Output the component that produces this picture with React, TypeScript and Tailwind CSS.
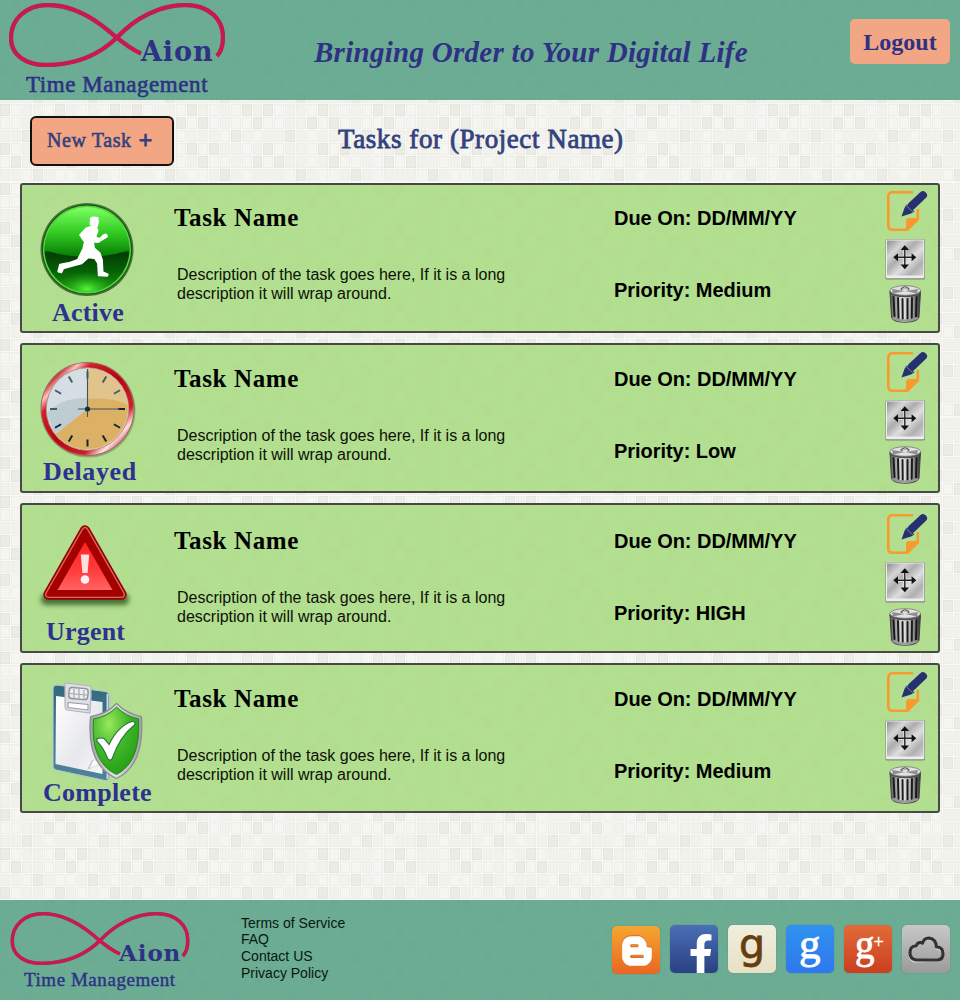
import type { ReactNode } from "react";
import { FaBloggerB, FaFacebookF } from "react-icons/fa";

const TILE_ROWS = ["DlmmlDmlmlDm", "llmmDlDlmllD", "mmDmlmmmlDml", "DlmmlDlDmmlm", "lDmmlmDllmlD", "mmlDmllmDmlm"];
const TILE_FILL: Record<string, string> = { D: "#edece4", m: "#f2f1eb", l: "#f5f6f2" };

function Mosaic() {
  const tiles: ReactNode[] = [];
  TILE_ROWS.forEach((row, r) => {
    for (let c = 0; c < 24; c++) {
      const kind = row[c % 12];
      tiles.push(
        <rect
          key={`${r}-${c}`}
          x={c * 11 + 0.5}
          y={r * 13 + 0.5}
          width={c === 23 ? 8 : 9}
          height={11}
          fill={TILE_FILL[kind]}
          stroke={kind === "D" ? "#e7e6de" : "#eeeee8"}
        />
      );
    }
  });
  const copies: ReactNode[] = [];
  for (let row = 0; row < 14; row++) {
    for (let col = 0; col < 4; col++) {
      copies.push(<use key={`${row}-${col}`} href="#mosaic" x={col * 263} y={Math.round(26 + (row - 1) * 78.3)} />);
    }
  }
  return (
    <svg className="absolute inset-0 -z-10 h-full w-full" aria-hidden="true">
      <defs>
        <g id="mosaic">{tiles}</g>
      </defs>
      <rect width="100%" height="100%" fill="#f8f8f6" />
      {copies}
    </svg>
  );
}

function Infinity({ className }: { className: string }) {
  const d =
    "M141 53.5C128 48 118 38.500 107 29.500C88 14 68 5 48 5C25 5 11 20 11 38C11 56 27 65 46 65C76 65 99 55 117 37.500C135 18 160 5 185 5C210 5 223 20 223 37C223 46 221 52 217 56";
  return (
    <svg viewBox="9 3 216 64" className={className} fill="none">
      <path d={d} stroke="#8d3a5c" strokeWidth="4.4" />
      <path d={d} stroke="#d0154f" strokeWidth="3.5" />
    </svg>
  );
}

function RunnerIcon() {
  return (
    <>
      <defs>
        <linearGradient id="orb" x1="0" y1="0" x2="0" y2="1">
          <stop offset="0" stopColor="#6dfb53" />
          <stop offset="0.25" stopColor="#35d425" />
          <stop offset="0.5" stopColor="#0b8a08" />
          <stop offset="0.54" stopColor="#043c04" />
          <stop offset="0.75" stopColor="#075f06" />
          <stop offset="1" stopColor="#1c9c12" />
        </linearGradient>
        <radialGradient id="orbGlow">
          <stop offset="0" stopColor="#57f53b" />
          <stop offset="1" stopColor="#18a010" stopOpacity="0" />
        </radialGradient>
        <linearGradient id="orbTop" x1="0" y1="0" x2="0" y2="1">
          <stop offset="0" stopColor="#7dff64" />
          <stop offset="0.5" stopColor="#33cc22" />
          <stop offset="1" stopColor="#067b05" />
        </linearGradient>
        <clipPath id="orbClip">
          <circle cx="87" cy="66.500" r="42.500" />
        </clipPath>
      </defs>
      <circle cx="87" cy="66.500" r="46.500" fill="#47743c" />
      <circle cx="87" cy="66.500" r="45" fill="#1d4d18" />
      <circle cx="87" cy="66.500" r="44" fill="#52da3c" />
      <circle cx="87" cy="66.500" r="42.500" fill="url(#orb)" />
      <path d="M44.500 67A42.500 42.500 0 0 1 129.500 67Q109 74 87 74Q65 74 44.500 67Z" fill="url(#orbTop)" />
      <ellipse cx="87" cy="106" rx="30" ry="17" fill="url(#orbGlow)" clipPath="url(#orbClip)" />
      <g fill="#fff" stroke="#fff" strokeWidth="1.900" strokeLinejoin="round">
        <path d="M91 35.500Q93 33.500 97.500 35L98 39L97 43L93.500 43.500L90.500 41Z" />
        <path d="M91 43.700L86 45.600L80.200 52L84 57.700L85.600 56.600L84.600 53.500L86.600 51.600L83.400 65.300L77.800 77L70 79.600L60 81.600L58.300 88.500L61.300 89.200L63.300 85.300L75 82L81.700 80.300L88.300 74.300L95 75.300L98 80.300L98.800 92.400L107.300 92.900L107.600 91.300L102.500 89L102 77L99.700 70.300L94 65.300L93 58.500L98.300 59L107 53.500L106 51.500L103.300 52.300L100 56L95.300 54.300L97.500 47.700L96 43.800Z" />
      </g>
    </>
  );
}

function ClockIcon() {
  const ticks = Array.from({ length: 12 }, (_, i) => i * 30);
  return (
    <>
      <defs>
        <linearGradient id="rim" x1="0" y1="0" x2="1" y2="1">
          <stop offset="0.12" stopColor="#b81c1c" />
          <stop offset="0.19" stopColor="#ffc4c4" />
          <stop offset="0.26" stopColor="#cc2228" />
          <stop offset="0.5" stopColor="#b4070c" />
          <stop offset="0.74" stopColor="#cc2228" />
          <stop offset="0.83" stopColor="#ffe2e2" />
          <stop offset="0.92" stopColor="#c52a2a" />
        </linearGradient>
      </defs>
      <circle cx="88.500" cy="67.500" r="47" fill="#5a6f44" opacity="0.450" />
      <circle cx="87.500" cy="66" r="47" fill="#8a6a66" />
      <circle cx="87.500" cy="66" r="46.200" fill="#d96c6c" />
      <circle cx="87.500" cy="66" r="43.600" fill="none" stroke="url(#rim)" strokeWidth="4.600" />
      <circle cx="87.500" cy="66" r="41.200" fill="#d5dee3" stroke="#b98f8a" strokeWidth="0.900" />
      <path d="M47 70Q64 51 100 56Q118 57 128 61A41 41 0 0 1 54 89Z" fill="#bfccd2" />
      <path d="M87.500 66V25.400A40.600 40.600 0 1 1 55.800 91.300Z" fill="#e1c38c" />
      <path d="M87.500 66V56Q113 54 127.500 62A40.600 40.600 0 0 1 55.800 91.300Z" fill="#ddb165" />
      {ticks.map((a) => (
        <path key={a} d="M87.500 28.500V35.500" stroke={a > 60 && a < 270 ? "#092836" : "#405e69"} strokeWidth="2" transform={`rotate(${a} 87.500 66)`} />
      ))}
      <path d="M87.500 26V74M78 66H120" stroke="#40555b" strokeWidth="1.100" />
      <circle cx="87.500" cy="66" r="2.600" fill="#0b3347" />
    </>
  );
}

function WarningIcon() {
  return (
    <>
      <defs>
        <linearGradient id="alarm" x1="0" y1="0" x2="0" y2="1">
          <stop offset="0" stopColor="#ff2424" />
          <stop offset="0.6" stopColor="#ff3c3c" />
          <stop offset="1" stopColor="#ff6464" />
        </linearGradient>
        <filter id="soft" x="-20%" y="-100%" width="140%" height="300%">
          <feGaussianBlur stdDeviation="2.500" />
        </filter>
      </defs>
      <rect x="41" y="91" width="88" height="11" rx="5" fill="#4a7034" filter="url(#soft)" />
      <path d="M85 27.500L48.500 91.500H121.500Z" fill="#a40000" stroke="#970000" strokeWidth="10.500" strokeLinejoin="round" />
      <path d="M85 27.500L48.500 91.500H121.500Z" fill="#a40000" stroke="#d96a6a" strokeWidth="7" strokeLinejoin="round" />
      <path d="M85 27.500L48.500 91.500H121.500Z" fill="#a40000" stroke="#a40000" strokeWidth="4.500" strokeLinejoin="round" />
      <path d="M85 39L57.500 87H112.500Z" fill="url(#alarm)" />
      <path d="M80.800 51.500H89.200L87.600 70H82.400Z" fill="#ffdede" />
      <circle cx="85" cy="76.500" r="4.300" fill="#fff0f0" />
    </>
  );
}

function ClipboardIcon() {
  return (
    <>
      <defs>
        <linearGradient id="paper" x1="0" y1="0" x2="1" y2="1">
          <stop offset="0" stopColor="#ffffff" />
          <stop offset="0.6" stopColor="#e7e8ec" />
          <stop offset="1" stopColor="#f8f8fa" />
        </linearGradient>
        <linearGradient id="board" x1="0" y1="0" x2="0" y2="1">
          <stop offset="0" stopColor="#336a80" />
          <stop offset="1" stopColor="#4f8397" />
        </linearGradient>
        <radialGradient id="shield" cx="0.35" cy="0.25" r="0.85">
          <stop offset="0" stopColor="#9be85c" />
          <stop offset="0.5" stopColor="#3db627" />
          <stop offset="1" stopColor="#239a13" />
        </radialGradient>
        <linearGradient id="silver" x1="0" y1="0" x2="1" y2="0">
          <stop offset="0" stopColor="#a0a0a6" />
          <stop offset="0.5" stopColor="#e0e0e4" />
          <stop offset="1" stopColor="#a0a0a6" />
        </linearGradient>
      </defs>
      <path d="M57 22L105 28.500Q109.500 29 109.500 34V114.500Q109 118 105 117.500L56 107Q53 106.500 53 103V26Q53 22 57 22Z" fill="url(#board)" stroke="#b3c8d0" strokeWidth="1.200" />
      <path d="M107.500 31V116" stroke="#c6dbe2" strokeWidth="2" />
      <path d="M56 33L102.500 39V111L55.500 101Z" fill="url(#paper)" />
      <path d="M87 107L92 97L96 99L102.500 96Z" fill="#c2c4ca" />
      <path d="M93 97L89 106L102.500 100V97Z" fill="#fafafa" stroke="#bbb" strokeWidth="0.500" />
      <path d="M65 20L91 23V34L90 50L67 47Q65 46 65 43Z" fill="#dedfe4" stroke="#b5b6bd" strokeWidth="1.200" />
      <rect x="69" y="25" width="19" height="11" rx="3" fill="#eeeef2" stroke="#8d929a" strokeWidth="1.400" transform="rotate(5 78 30)" />
      <path d="M74 26V35M79 26V36M84 27V36M69 30.500L87 32" stroke="#a4a8af" strokeWidth="1.200" />
      <path d="M68 39.500L88 41.500V47L68 44.500Z" fill="#fff" stroke="#999ca6" strokeWidth="1.100" />
      <path d="M116.500 40.500Q107 51 90.500 53.500Q86 102 116.500 115.500Q145 102 141.500 53.500Q127 51 116.500 40.500Z" fill="url(#silver)" stroke="#8a8c8e" strokeWidth="1.200" strokeLinejoin="round" />
      <path d="M116.500 44Q108 53.500 93.500 56Q90 99 116.500 111.500Q141 99 138.500 56Q126 53.500 116.500 44Z" fill="url(#shield)" stroke="#208b17" strokeWidth="1" />
      <path d="M97 75.500Q102 74.500 104 75.500L109 81.500Q118 63 132 58.500Q136 58 134.500 62Q120 73 112 96Q109 99 107 94Q103 84 97 78.500Z" fill="#fff" stroke="#28753a" strokeWidth="1.100" />
    </>
  );
}

function EditIcon() {
  return (
    <svg viewBox="0 0 44 44" className="h-11 w-11" fill="none">
      <path d="M29 2.300H8.500Q4.300 2.300 4.300 6.500V35.500Q4.300 39.700 8.500 39.700H22L33.800 29V19" stroke="#fa9a2c" strokeWidth="2.600" />
      <path d="M22 41V31Q22 28 25 28H35V30L24 41Z" fill="#fa9a2c" />
      <path d="M27.500 16L39 5.200" stroke="#29306f" strokeWidth="8" strokeLinecap="round" />
      <path d="M22.500 14.500L30.500 21.500L27 23.500L17.500 26.500L20.500 18Z" fill="#29306f" />
      <path d="M22 15.500L29.500 22.500" stroke="#b2de90" strokeWidth="0.500" />
    </svg>
  );
}

function MoveIcon() {
  return (
    <svg viewBox="0 0 44 46" className="h-[46px] w-11">
      <defs>
        <linearGradient id="steel" x1="0" y1="0" x2="1" y2="1">
          <stop offset="0" stopColor="#8e8e8e" />
          <stop offset="0.25" stopColor="#d5d5d5" />
          <stop offset="0.42" stopColor="#adadad" />
          <stop offset="0.6" stopColor="#dedede" />
          <stop offset="0.8" stopColor="#b0b0b0" />
          <stop offset="1" stopColor="#d4d4d4" />
        </linearGradient>
      </defs>
      <rect x="1.500" y="5" width="39.500" height="40.500" rx="1.500" fill="#80887a" />
      <rect x="2" y="5.500" width="38.300" height="38.800" rx="1" fill="#ededed" />
      <rect x="3" y="6.500" width="36.300" height="35" fill="url(#steel)" />
      <path d="M20.800 14V33M11 23.300H30.500" stroke="#e8e8e8" strokeWidth="3" />
      <path d="M20.800 14V33M11 23.300H30.500" stroke="#222" strokeWidth="1.400" />
      <path d="M20.800 11.300L25 16H16.600ZM20.800 35.300L25 30.600H16.600ZM9.300 23.300L14 19.300V27.300ZM32.300 23.300L27.600 19.300V27.300Z" fill="#111" />
    </svg>
  );
}

function TrashIcon() {
  return (
    <svg viewBox="0 0 44 46" className="h-[46px] w-11">
      <defs>
        <linearGradient id="can" x1="0" y1="0" x2="1" y2="0">
          <stop offset="0" stopColor="#555" />
          <stop offset="0.4" stopColor="#eee" />
          <stop offset="0.7" stopColor="#aaa" />
          <stop offset="1" stopColor="#333" />
        </linearGradient>
      </defs>
      <path d="M6 12L7.500 37Q8 42 21 42.300Q34 42 35 37L36.500 12Z" fill="url(#can)" stroke="#3d3d3d" strokeWidth="0.900" />
      <path d="M9.500 17L10.500 36M14 18L14.500 38M18.500 19L18.700 39M23.500 19V39M28 18L27.700 38M32.500 17L32 36.500" stroke="#1b1b1b" strokeWidth="2" strokeLinecap="round" />
      <path d="M8.500 38Q21 43 34 38" stroke="#999" strokeWidth="2.200" fill="none" />
      <ellipse cx="21.200" cy="11.800" rx="15.800" ry="5.500" fill="#4e4e4e" />
      <ellipse cx="21.200" cy="10.500" rx="15.300" ry="4.800" fill="#e2e2e2" stroke="#777" strokeWidth="0.800" />
      <path d="M8 9L21 11L9 13.500ZM34 9L21 11L33 13.500Z" fill="#8f8f8f" />
      <path d="M17 9.500Q21 5 25 9.500" fill="none" stroke="#555" strokeWidth="2" />
      <path d="M18 9Q21 6 24 9" fill="none" stroke="#ddd" strokeWidth="0.800" />
    </svg>
  );
}

type Task = {
  status: string;
  icon: ReactNode;
  labelClass: string;
  priority: string;
  shift: string;
};

const TASKS: Task[] = [
  { status: "Active", icon: <RunnerIcon />, labelClass: "ml-[30px] mt-0 tracking-[0.2px]", priority: "Medium", shift: "pt-0" },
  { status: "Delayed", icon: <ClockIcon />, labelClass: "ml-[21px] mt-[-1px] tracking-[0.6px]", priority: "Low", shift: "pt-px" },
  { status: "Urgent", icon: <WarningIcon />, labelClass: "ml-[24px] mt-[-1px] tracking-[0.2px]", priority: "HIGH", shift: "pt-[3px]" },
  { status: "Complete", icon: <ClipboardIcon />, labelClass: "ml-[21px] mt-0 tracking-[0.25px]", priority: "Medium", shift: "pt-px" },
];

function TaskCard({ task }: { task: Task }) {
  return (
    <article className="flex h-[150px] rounded-[3px] border-2 border-[#474847] bg-[rgba(167,218,127,0.85)]">
      <div className="w-[152px] shrink-0 pt-2">
        <svg viewBox="34 10 116 108" className="ml-3 h-[108px] w-[116px]">
          {task.icon}
        </svg>
        <p className={`font-['Liberation_Serif',serif] text-[26px] font-bold leading-6 text-[#2e3192] ${task.labelClass}`}>
          {task.status}
        </p>
      </div>
      <div className={`w-[440px] shrink-0 ${task.shift}`}>
        <h2 className="mt-[18px] font-['Liberation_Serif',serif] text-[25px] font-bold leading-[30px] tracking-[0.65px] text-black">Task Name</h2>
        <p className="ml-[3px] mt-8 w-[345px] font-['Liberation_Sans',sans-serif] text-base leading-[19px] text-[#0c1208]">
          Description of the task goes here, If it is a long description it will wrap around.
        </p>
      </div>
      <div className={`w-[248px] shrink-0 font-['Liberation_Sans',sans-serif] text-xl font-bold leading-6 tracking-[-0.04px] text-black ${task.shift}`}>
        <p className="mt-[21px]">Due On: DD/MM/YY</p>
        <p className="mt-12">Priority: {task.priority}</p>
      </div>
      <div className={`ml-[22px] flex flex-col ${task.shift}`}>
        <button className="mt-[5px] block h-11"><EditIcon /></button>
        <button className="block h-[46px]"><MoveIcon /></button>
        <button className="block h-[46px]"><TrashIcon /></button>
      </div>
    </article>
  );
}

function SocialTile({ className, children }: { className: string; children: ReactNode }) {
  return (
    <a className={`flex h-12 w-12 shrink-0 rounded-[5px] bg-linear-to-b shadow-[0_0_1px_rgba(0,0,0,0.4)] ${className}`}>
      {children}
    </a>
  );
}

export default function App() {
  return (
    <div className="relative isolate flex h-[1000px] w-[960px] flex-col overflow-hidden bg-[#f4f4ef]">
      <Mosaic />
      <header className="flex h-[100px] shrink-0 bg-[rgba(92,164,137,0.9)] font-['Liberation_Serif',serif] text-[#2e3184]">
        <div className="w-[314px] shrink-0 pl-[9px] pt-[3px]">
          <Infinity className="h-16 w-[216px]" />
          <p className="-mt-[31px] ml-[132px] font-['DejaVu_Serif',serif] text-[27px] font-bold leading-8 tracking-[0.9px]">Aion</p>
          <p className="ml-[17px] mt-1 text-[23px] leading-[26px] tracking-[0.57px] [-webkit-text-stroke:0.6px_#2e3184]">Time Management</p>
        </div>
        <h1 className="w-[536px] shrink-0 whitespace-nowrap pt-[35px] text-[29px] font-bold italic leading-[34px] tracking-[0.28px]">
          Bringing Order to Your Digital Life
        </h1>
        <button className="mt-[19px] h-[45px] w-[100px] rounded-[5px] bg-[#f3a683] text-2xl font-bold">Logout</button>
      </header>

      <main className="h-[800px] shrink-0 px-5 pt-4">
        <div className="flex h-[67px] font-['Liberation_Serif',serif] text-[#33427f]">
          <button className="ml-[10px] flex h-[50px] w-36 rounded-[6px] border-2 border-[#111] bg-[#f3a683] pl-[15px] pt-[10px] text-left text-xl leading-6 tracking-[0.6px] [-webkit-text-stroke:0.6px_#33427f]">
            New Task<span className="ml-[7px] font-['Liberation_Sans',sans-serif] text-[23px] leading-6 [-webkit-text-stroke:0.8px_#33427f]">+</span>
          </button>
          <h2 className="ml-[164px] pt-[7px] text-[27px] leading-8 tracking-[0.58px] [-webkit-text-stroke:0.8px_#33427f]">Tasks for (Project Name)</h2>
        </div>
        <div className="flex flex-col gap-[10px]">
          {TASKS.map((task) => (
            <TaskCard key={task.status} task={task} />
          ))}
        </div>
      </main>

      <footer className="flex h-[100px] shrink-0 bg-[rgba(92,164,137,0.9)]">
        <div className="w-[241px] shrink-0 pl-[10px] pt-3 font-['Liberation_Serif',serif] text-[#2e3184]">
          <Infinity className="h-[53px] w-[180px]" />
          <p className="-mt-[26px] ml-[109px] font-['DejaVu_Serif',serif] text-[23px] font-bold leading-7 tracking-[0.9px]">Aion</p>
          <p className="ml-[14px] mt-0.5 text-[19px] leading-[22px] tracking-[0.55px] [-webkit-text-stroke:0.4px_#2e3184]">Time Management</p>
        </div>
        <nav className="flex w-[371px] shrink-0 flex-col pt-[14.500px] font-['Liberation_Sans',sans-serif] text-sm leading-[16.8px] text-[#07180f]">
          <a>Terms of Service</a>
          <a>FAQ</a>
          <a>Contact US</a>
          <a>Privacy Policy</a>
        </nav>
        <div className="flex gap-[10px] pt-[25px]">
          <SocialTile className="mt-px from-[#f3a630] to-[#e96522]">
            <FaBloggerB className="ml-[9px] mt-[8px] h-[34px] w-[32px] text-white drop-shadow-[0_-1px_0_#e0662b]" />
          </SocialTile>
          <SocialTile className="from-[#496fb5] to-[#2b4183]">
            <FaFacebookF className="ml-[18px] mt-[9px] h-[39px] w-[26px] shrink-0 text-white" />
          </SocialTile>
          <SocialTile className="from-[#f0eedf] to-[#e7e0c5]">
            <span className="ml-[11px] mt-[-5px] font-['DejaVu_Sans',sans-serif] text-[41px] leading-[48px] text-[#683d0e] [-webkit-text-stroke:0.8px_#683d0e]">g</span>
          </SocialTile>
          <SocialTile className="from-[#3092ef] to-[#2f77ee]">
            <span className="ml-[13px] mt-[-5px] font-['Liberation_Serif',serif] text-[43px] leading-[48px] text-white [-webkit-text-stroke:0.8px_#fff]">g</span>
          </SocialTile>
          <SocialTile className="from-[#e16b38] to-[#cb3d1f]">
            <span className="ml-[11px] mt-[-4px] font-['Liberation_Serif',serif] text-[39px] leading-[48px] text-white [-webkit-text-stroke:0.8px_#fff]">g</span>
            <span className="mt-[7px] ml-[-1px] font-['Liberation_Serif',serif] text-lg leading-5 text-white [-webkit-text-stroke:0.4px_#fff]">+</span>
          </SocialTile>
          <SocialTile className="from-[#c8c8c8] to-[#9b9b9b]">
            <svg viewBox="0 0 48 48" className="h-12 w-12" fill="none">
              <path d="M14 36Q8 36 8 29Q8 22 14 21Q15 16 20 17Q24 12 29 14Q35 16 35 23Q41 24 41 30Q40 35 36 35Z" stroke="#dadada" strokeWidth="3" />
              <path d="M14 35Q8 34 8 28Q8 21 14 21Q16 16 20.500 18Q22 13 27 13Q34 14 34.500 22Q41 22 41 29Q41 35 35 35Z" stroke="#333" strokeWidth="3.200" strokeLinejoin="round" />
            </svg>
          </SocialTile>
        </div>
      </footer>
    </div>
  );
}
